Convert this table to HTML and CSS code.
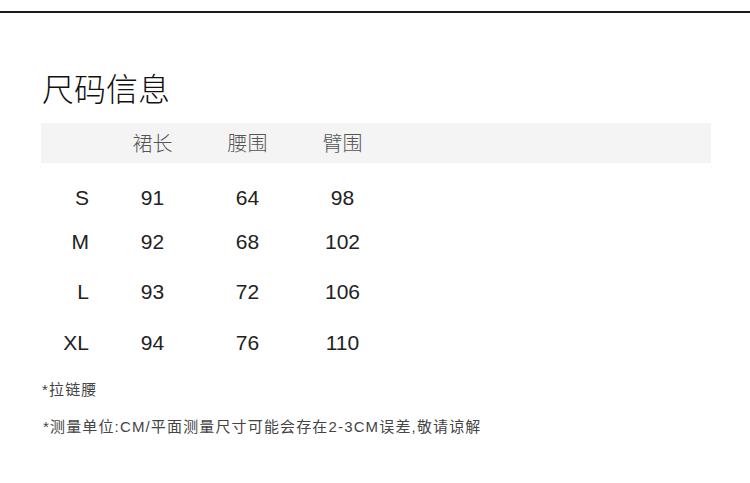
FILE: index.html
```html
<!DOCTYPE html>
<html lang="zh-CN">
<head>
<meta charset="utf-8">
<title>尺码信息</title>
<link rel="stylesheet" href="styles.css">
</head>
<body>
<div class="rule"></div>
<main class="page">
  <h1 class="title">尺码信息</h1>
  <section class="size-table">
    <div class="head">
      <span class="cell size"></span>
      <span class="cell">裙长</span>
      <span class="cell">腰围</span>
      <span class="cell">臂围</span>
    </div>
    <div class="body">
      <span class="cell size">S</span><span class="cell">91</span><span class="cell">64</span><span class="cell">98</span>
      <span class="cell size">M</span><span class="cell">92</span><span class="cell">68</span><span class="cell">102</span>
      <span class="cell size">L</span><span class="cell">93</span><span class="cell">72</span><span class="cell">106</span>
      <span class="cell size">XL</span><span class="cell">94</span><span class="cell">76</span><span class="cell">110</span>
    </div>
  </section>
  <p class="note note-first">*拉链腰</p>
  <p class="note note-second">*测量单位:CM/平面测量尺寸可能会存在2-3CM误差,敬请谅解</p>
</main>
</body>
</html>
```

FILE: styles.css
```css
* { box-sizing: border-box; }
html, body { margin: 0; padding: 0; background: #fff; }
body {
  font-family: "Liberation Sans", "Noto Sans CJK SC", sans-serif;
  color: #222;
}
.rule {
  margin-top: 11px;
  height: 2px;
  background: #1a1a1a;
}
.page {
  padding: 0 39px 0 41px;
}
.title {
  margin: 58px 0 0 1px;
  font-family: "Noto Sans CJK SC", sans-serif;
  font-weight: 300;
  font-size: 32px;
  line-height: 32px;
  color: #111;
}
.size-table {
  margin-top: 20px;
}
.head, .body {
  display: grid;
  grid-template-columns: 64px repeat(3, 95px);
  align-items: center;
}
.head {
  height: 40px;
  background: #f4f4f4;
  font-family: "Noto Sans CJK SC", sans-serif;
  font-weight: 300;
  font-size: 20px;
  color: #555;
}
.body {
  padding-top: 13px;
  grid-template-rows: 44px 44px 56px 46px;
  font-size: 21px;
  color: #222;
}
.cell {
  text-align: center;
  line-height: 24px;
}
.cell.size {
  text-align: right;
  padding-right: 16px;
}
.note {
  margin: 0;
  font-family: "Liberation Sans", "Noto Sans CJK SC", sans-serif;
  font-size: 15px;
  line-height: 20px;
  color: #444;
  letter-spacing: 1.15px;
}
.note-first {
  margin-top: 14px;
  padding-left: 1px;
}
.note-second {
  margin-top: 17px;
  padding-left: 2px;
}
```
